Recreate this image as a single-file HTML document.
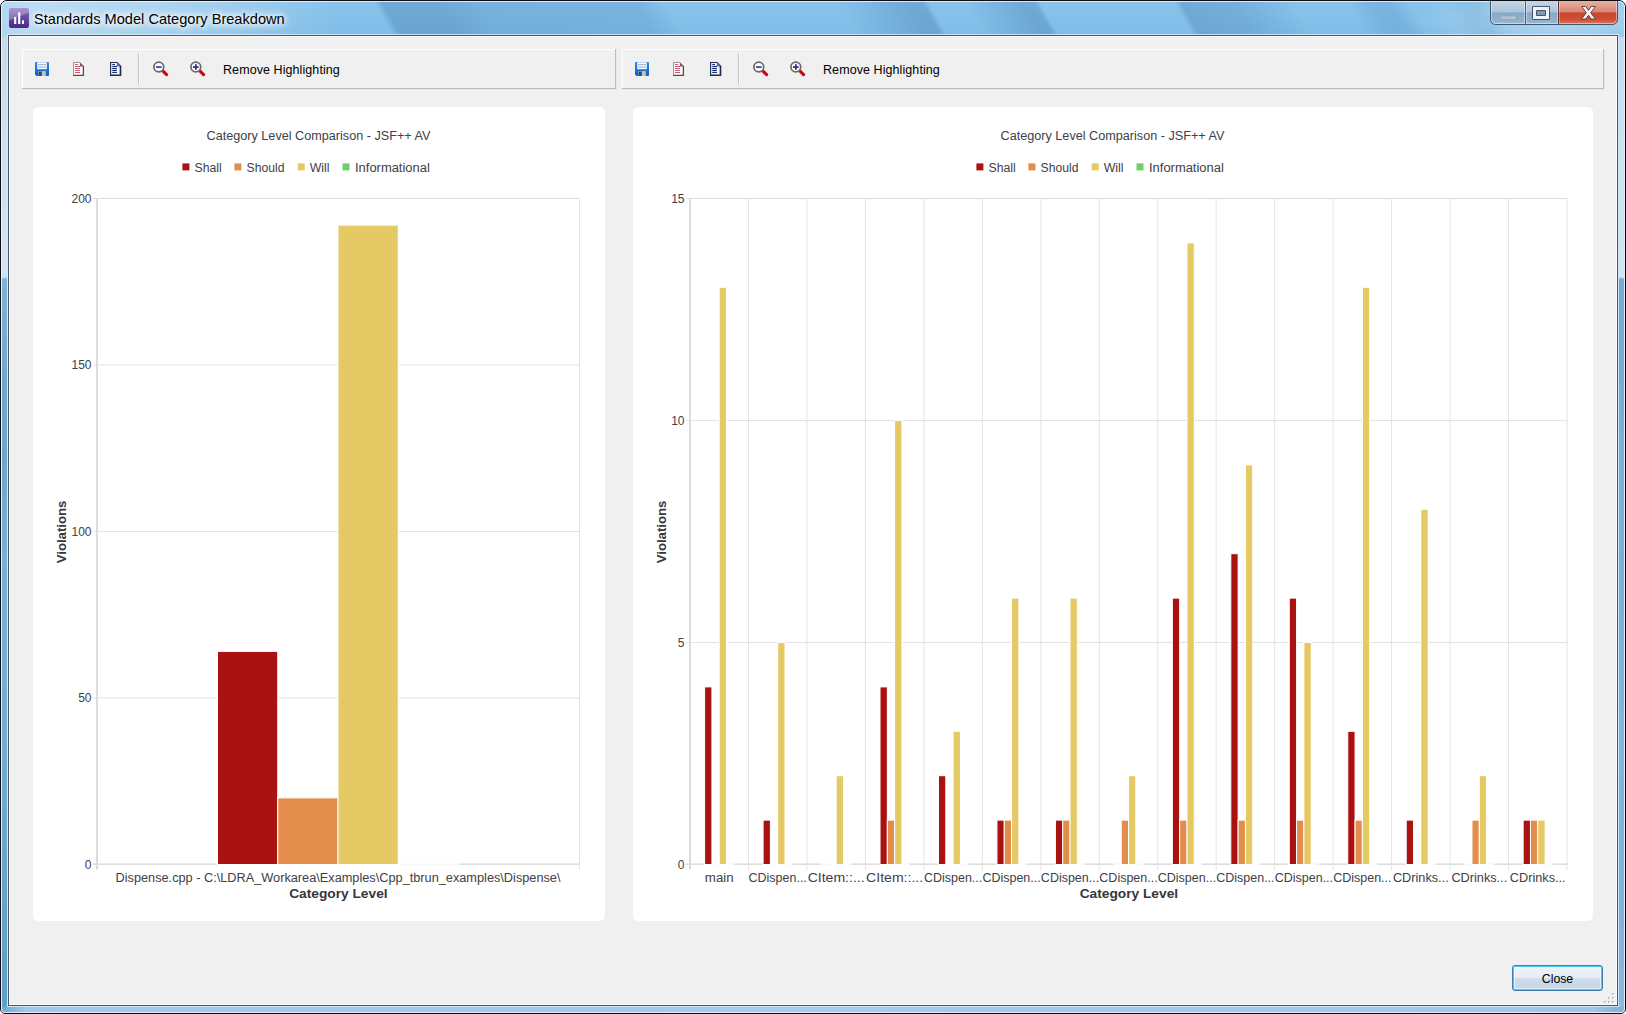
<!DOCTYPE html>
<html>
<head>
<meta charset="utf-8">
<title>Standards Model Category Breakdown</title>
<style>
html,body{margin:0;padding:0;background:#fff;}
body{width:1626px;height:1014px;position:relative;overflow:hidden;font-family:"Liberation Sans",sans-serif;}
.abs{position:absolute;}
#win{left:0;top:0;width:1624px;height:1012px;border:1px solid #0e0e10;border-radius:7px 7px 5px 5px;
 background:#7fbbe4;overflow:hidden;}
#glass{left:0;top:0;width:1624px;height:1012px;
 background:
  radial-gradient(ellipse 150px 40px at 1560px 18px, rgba(255,255,255,0.38), rgba(255,255,255,0.22) 50%, rgba(255,255,255,0) 100%),
  linear-gradient(105deg, rgba(245,250,252,0.38) 0px, rgba(255,255,255,0.44) 30px, rgba(255,255,255,0.30) 160px, rgba(255,255,255,0.05) 300px, rgba(255,255,255,0) 330px),
  linear-gradient(180deg,#88c3ec 0px,#80bde6 34px);}
#hl{left:0;top:0;width:1622px;height:1010px;border:1px solid rgba(255,255,255,0.72);border-radius:6px 6px 4px 4px;}
#sideL,#sideR{top:36px;width:5px;height:970px;
 background:linear-gradient(180deg,#c4dbec 0px,#cfe2ef 120px,#d3e4f0 236px,#c9e4f6 240px,#7eb3d6 242px,#72a9cf 330px,#6ea6cc 420px,#79b0d6 520px,#74acd2 700px,#6aa3c9 860px,#5f9fc8 969px);}
#sideL{left:1px;}
#sideR{left:1618px;background:linear-gradient(180deg,#c6dcec 0px,#cfe1ef 120px,#d3e3f0 236px,#cfe6f6 240px,#7aa9d4 242px,#79a8d2 330px,#80aed8 420px,#7eacd6 520px,#86b3dc 700px,#82afd8 860px,#90b7dc 969px);}
#bottom{left:1px;top:1006px;width:1622px;height:5px;background:linear-gradient(90deg,#6fa8d0 0px,#a3c6ea 24px,#a8caec 800px,#a3c5e8 1590px,#7fb0d8 1622px);}
#clientb{left:7px;top:34px;width:1608px;height:969px;border:1px solid #46596a;box-shadow:0 0 0 1px rgba(225,240,252,0.78);background:#f0f0f0;}
#clienti{left:0;top:0;width:1606px;height:967px;border:1px solid #fcfcfc;}
#title{left:34px;top:9px;height:20px;line-height:20px;font-size:14.6px;color:#000;white-space:nowrap;
 text-shadow:0 0 6px #fff,0 0 9px #fff,0 0 12px rgba(255,255,255,.9),0 0 4px rgba(255,255,255,.8);}
.tb{height:39px;top:49px;border-right:1px solid #bdbdbd;border-bottom:1px solid #b9b9b9;box-shadow:inset 1px 1px 0 #fff, 1px 1px 0 rgba(0,0,0,0.03);}
.tbtxt{top:63px;font-size:12.5px;letter-spacing:0.08px;line-height:14px;color:#000;white-space:nowrap;}
.panel{background:#fff;border-radius:5px;top:107px;height:814px;}
#close{left:1512px;top:965px;width:89px;height:24px;border:1px solid #3c7fb1;border-radius:3px;
 box-shadow:inset 0 0 0 1px #42cdf4, inset 0 0 0 2px rgba(255,255,255,0.55);
 background:linear-gradient(180deg,#eef3f8 0%,#e6edf4 48%,#d0dde9 52%,#c6d6e6 100%);
 font-size:12.3px;line-height:26px;text-align:center;color:#000;}
svg text{font-family:"Liberation Sans",sans-serif;}
</style>
</head>
<body>
<div id="win" class="abs">
 <div id="glass" class="abs"></div>
<svg class="abs" style="left:0;top:0" width="1624" height="34" viewBox="0 0 1624 34">
  <defs>
   <linearGradient id="s1" x1="0" y1="0" x2="1" y2="0"><stop offset="0" stop-color="#2d6494" stop-opacity="0"/><stop offset="0.03" stop-color="#2d6494" stop-opacity="0.27"/><stop offset="0.22" stop-color="#2d6494" stop-opacity="0.27"/><stop offset="0.36" stop-color="#2d6494" stop-opacity="0.17"/><stop offset="0.9" stop-color="#2d6494" stop-opacity="0.15"/><stop offset="1" stop-color="#2d6494" stop-opacity="0"/></linearGradient>
   <linearGradient id="s2" x1="0" y1="0" x2="1" y2="0"><stop offset="0" stop-color="#2d6494" stop-opacity="0"/><stop offset="0.8" stop-color="#2d6494" stop-opacity="0.27"/><stop offset="0.93" stop-color="#2d6494" stop-opacity="0.25"/><stop offset="1" stop-color="#2d6494" stop-opacity="0"/></linearGradient>
   <linearGradient id="s4" x1="0" y1="0" x2="1" y2="0"><stop offset="0" stop-color="#2d6494" stop-opacity="0"/><stop offset="0.06" stop-color="#2d6494" stop-opacity="0.25"/><stop offset="0.5" stop-color="#2d6494" stop-opacity="0.2"/><stop offset="1" stop-color="#2d6494" stop-opacity="0"/></linearGradient>
   <linearGradient id="s5" x1="0" y1="0" x2="1" y2="0"><stop offset="0" stop-color="#2d6494" stop-opacity="0"/><stop offset="0.4" stop-color="#2d6494" stop-opacity="0.14"/><stop offset="0.7" stop-color="#2d6494" stop-opacity="0.14"/><stop offset="1" stop-color="#2d6494" stop-opacity="0"/></linearGradient>
  </defs>
  <g transform="skewX(30)">
   <rect x="372" y="0" width="290" height="34" fill="url(#s1)"/>
   <rect x="835" y="0" width="92" height="34" fill="url(#s2)"/>
   <rect x="962" y="0" width="76" height="34" fill="url(#s2)"/>
   <rect x="1172" y="0" width="120" height="34" fill="url(#s4)"/>
   <rect x="1345" y="0" width="62" height="34" fill="url(#s5)"/>
   <rect x="1440" y="0" width="50" height="34" fill="url(#s5)" opacity="0.7"/>
  </g>
 </svg>
 <div id="sideL" class="abs"></div>
 <div id="sideR" class="abs"></div>
 <div id="bottom" class="abs"></div>
 <div id="hl" class="abs"></div>
 <div id="clientb" class="abs"><div id="clienti" class="abs"></div></div>
</div>

<!-- title bar -->
<svg class="abs" style="left:9px;top:8px" width="20" height="20" viewBox="0 0 20 20">
 <defs><linearGradient id="ig" x1="0" y1="0" x2="0" y2="1"><stop offset="0" stop-color="#8e70bd"/><stop offset="0.5" stop-color="#6543a6"/><stop offset="1" stop-color="#482886"/></linearGradient></defs>
 <rect x="0" y="0" width="20" height="20" rx="2.2" fill="url(#ig)"/>
 <path d="M0 2.2a2.2 2.2 0 0 1 2.2-2.2h15.6a2.2 2.2 0 0 1 2.2 2.2V4.5L0 12.5z" fill="#fff" opacity="0.26"/>
 <rect x="5.1" y="9" width="2.2" height="7" fill="#fff" opacity="0.95"/>
 <rect x="9.1" y="4.3" width="2.2" height="11.7" fill="#fff" opacity="0.97"/>
 <rect x="13" y="12.3" width="2" height="3.7" fill="#fff" opacity="0.95"/>
</svg>
<div id="title" class="abs">Standards Model Category Breakdown</div>

<!-- caption buttons -->
<svg class="abs" style="left:1486px;top:0" width="136" height="28" viewBox="1486 0 136 28">
 <defs>
  <linearGradient id="gb" x1="0" y1="0" x2="0" y2="1"><stop offset="0" stop-color="#c3d7e7"/><stop offset="0.45" stop-color="#aac5da"/><stop offset="0.5" stop-color="#86aaca"/><stop offset="0.85" stop-color="#8fb2d0"/><stop offset="1" stop-color="#a3c3dc"/></linearGradient>
  <linearGradient id="gc" x1="0" y1="0" x2="0" y2="1"><stop offset="0" stop-color="#e8b0a2"/><stop offset="0.45" stop-color="#d98672"/><stop offset="0.5" stop-color="#c8452c"/><stop offset="0.8" stop-color="#cf5238"/><stop offset="1" stop-color="#dd8a70"/></linearGradient>
  <clipPath id="cpb"><path d="M1490.5 1H1617.5V19.5a5 5 0 0 1-5 5H1495.5a5 5 0 0 1-5-5z"/></clipPath>
 </defs>
 <g clip-path="url(#cpb)">
  <rect x="1490" y="1" width="35" height="24" fill="url(#gb)"/>
  <rect x="1525" y="1" width="33" height="24" fill="url(#gb)"/>
  <rect x="1558" y="1" width="60" height="24" fill="url(#gc)"/>
 </g>
 <path d="M1490.5 1V19.5a5 5 0 0 0 5 5H1612.5a5 5 0 0 0 5-5V1" fill="none" stroke="#41556b" stroke-width="1"/>
 <path d="M1491.5 1V19.5a4 4 0 0 0 4 4H1612.5a4 4 0 0 0 4-4V1" fill="none" stroke="#fff" stroke-opacity="0.45" stroke-width="1"/>
 <line x1="1525.5" y1="1" x2="1525.5" y2="24" stroke="#4a5f78"/>
 <line x1="1558.5" y1="1" x2="1558.5" y2="24" stroke="#6a3030"/>
 <line x1="1526.5" y1="1" x2="1526.5" y2="23" stroke="#fff" stroke-opacity="0.4"/>
 <line x1="1524.5" y1="1" x2="1524.5" y2="23" stroke="#fff" stroke-opacity="0.4"/>
 <line x1="1557.5" y1="1" x2="1557.5" y2="23" stroke="#fff" stroke-opacity="0.4"/>
 <line x1="1559.5" y1="1" x2="1559.5" y2="23" stroke="#fff" stroke-opacity="0.3"/>
 <!-- minimise -->
 <rect x="1501" y="16" width="15" height="3.4" fill="#b9c6d3" stroke="#8ea0b3" stroke-width="0.6" opacity="0.95"/>
 <!-- maximise -->
 <rect x="1536.5" y="10.5" width="9" height="5" fill="#7e9ab6"/><path d="M1532.5 6.5h17v13h-17z M1536.5 10.5v5h9v-5z" fill="#f1f3f6" fill-rule="evenodd" stroke="#46566c" stroke-width="1"/>
 <!-- close X -->
 <path d="M1581.6 6.5h4.2l2.7 3.9 2.7-3.9h4.2l-4.8 6.3 4.9 6.2h-4.3l-2.7-3.8-2.7 3.8h-4.3l4.9-6.2z" fill="#f6f6f6" stroke="#5a3a3a" stroke-width="0.9" stroke-linejoin="round"/>
</svg>

<!-- toolbars -->
<div class="tb abs" style="left:22px;width:593px;"></div>
<div class="tb abs" style="left:622px;width:981px;"></div>
<div class="tbtxt abs" style="left:223px;">Remove Highlighting</div>
<div class="tbtxt abs" style="left:823px;">Remove Highlighting</div>

<svg class="abs" style="left:0;top:44px" width="1626" height="50" viewBox="0 44 1626 50">
 <defs>
  <linearGradient id="sv" x1="0" y1="0" x2="0" y2="1"><stop offset="0" stop-color="#2b8ae6"/><stop offset="1" stop-color="#0f60bc"/></linearGradient>
 </defs>
 <g>
   <!-- save -->
   <path d="M35 63a1 1 0 0 1 1-1h12a1 1 0 0 1 1 1v12a1 1 0 0 1-1 1H36.5L35 74.5z" fill="url(#sv)"/>
   <rect x="37.2" y="62.3" width="9.6" height="6.9" fill="#fdfdfd"/>
   <rect x="38" y="64.2" width="8" height="1" fill="#8fa8d6"/>
   <rect x="38" y="66.6" width="8" height="1" fill="#8fa8d6"/>
   <rect x="38.5" y="71" width="7.5" height="5" fill="#b9b3a8"/>
   <rect x="39" y="71.5" width="2.6" height="4.5" fill="#123f9a"/>
   <rect x="43" y="71.5" width="1.2" height="4.5" fill="#d8c8b0"/>
   <!-- doc 1 -->
   <path d="M73.5 62.4H80L83.6 66V75.6H73.5z" fill="#fffdfd"/>
   <path d="M73.6 75.6V62.4H80" fill="none" stroke="#a67c7c" stroke-width="0.9"/>
   <path d="M80 62.2L83.9 66.1V66.4H79.8z" fill="#8a5558"/>
   <path d="M83.4 66V75.4H73.4" fill="none" stroke="#6e3c40" stroke-width="1.3"/>
   <g stroke="#cc5570" stroke-width="1"><line x1="75" y1="64.5" x2="78" y2="64.5"/><line x1="75" y1="66.5" x2="80" y2="66.5"/><line x1="75" y1="68.5" x2="80" y2="68.5"/><line x1="75" y1="70.5" x2="80" y2="70.5"/><line x1="75" y1="72.5" x2="80" y2="72.5"/></g>
   <!-- doc 2 -->
   <path d="M110.6 62.5H117L120.6 66V75.5H110.6z" fill="#fdfeff" stroke="#22304f" stroke-width="1.2"/>
   <path d="M117 62.2L120.9 66.1V66.6H116.8z" fill="#5e6f9a"/>
   <path d="M120.4 66V75.3H110.6" fill="none" stroke="#1f2c4a" stroke-width="1.5"/>
   <g stroke="#1c3278" stroke-width="1.2"><line x1="112.2" y1="64.5" x2="115" y2="64.5"/><line x1="112.2" y1="66.5" x2="117" y2="66.5"/><line x1="112.2" y1="68.5" x2="117" y2="68.5"/><line x1="112.2" y1="70.5" x2="117" y2="70.5"/><line x1="112.2" y1="72.5" x2="117" y2="72.5"/></g>
   <!-- separator -->
   <line x1="138.5" y1="53" x2="138.5" y2="85" stroke="#c3c3c3"/>
   <line x1="139.5" y1="53" x2="139.5" y2="85" stroke="#fafafa"/>
   <!-- zoom out -->
   <line x1="163" y1="71.2" x2="166.6" y2="74.6" stroke="#c8091c" stroke-width="3.2" stroke-linecap="round"/>
   <circle cx="158.8" cy="67" r="4.9" fill="#fff" stroke="#6d675c" stroke-width="1.7"/>
   <rect x="156" y="66.2" width="5.6" height="1.7" fill="#3434b0"/>
   <!-- zoom in -->
   <line x1="200" y1="71.2" x2="203.6" y2="74.6" stroke="#c8091c" stroke-width="3.2" stroke-linecap="round"/>
   <circle cx="195.8" cy="67" r="4.9" fill="#fff" stroke="#6d675c" stroke-width="1.7"/>
   <rect x="193" y="66.2" width="5.6" height="1.7" fill="#2a2a9c"/>
   <rect x="195" y="64.2" width="1.7" height="5.6" fill="#2a2a9c"/>
 </g>
 <g transform="translate(600,0)">
   <!-- save -->
   <path d="M35 63a1 1 0 0 1 1-1h12a1 1 0 0 1 1 1v12a1 1 0 0 1-1 1H36.5L35 74.5z" fill="url(#sv)"/>
   <rect x="37.2" y="62.3" width="9.6" height="6.9" fill="#fdfdfd"/>
   <rect x="38" y="64.2" width="8" height="1" fill="#8fa8d6"/>
   <rect x="38" y="66.6" width="8" height="1" fill="#8fa8d6"/>
   <rect x="38.5" y="71" width="7.5" height="5" fill="#b9b3a8"/>
   <rect x="39" y="71.5" width="2.6" height="4.5" fill="#123f9a"/>
   <rect x="43" y="71.5" width="1.2" height="4.5" fill="#d8c8b0"/>
   <!-- doc 1 -->
   <path d="M73.5 62.4H80L83.6 66V75.6H73.5z" fill="#fffdfd"/>
   <path d="M73.6 75.6V62.4H80" fill="none" stroke="#a67c7c" stroke-width="0.9"/>
   <path d="M80 62.2L83.9 66.1V66.4H79.8z" fill="#8a5558"/>
   <path d="M83.4 66V75.4H73.4" fill="none" stroke="#6e3c40" stroke-width="1.3"/>
   <g stroke="#cc5570" stroke-width="1"><line x1="75" y1="64.5" x2="78" y2="64.5"/><line x1="75" y1="66.5" x2="80" y2="66.5"/><line x1="75" y1="68.5" x2="80" y2="68.5"/><line x1="75" y1="70.5" x2="80" y2="70.5"/><line x1="75" y1="72.5" x2="80" y2="72.5"/></g>
   <!-- doc 2 -->
   <path d="M110.6 62.5H117L120.6 66V75.5H110.6z" fill="#fdfeff" stroke="#22304f" stroke-width="1.2"/>
   <path d="M117 62.2L120.9 66.1V66.6H116.8z" fill="#5e6f9a"/>
   <path d="M120.4 66V75.3H110.6" fill="none" stroke="#1f2c4a" stroke-width="1.5"/>
   <g stroke="#1c3278" stroke-width="1.2"><line x1="112.2" y1="64.5" x2="115" y2="64.5"/><line x1="112.2" y1="66.5" x2="117" y2="66.5"/><line x1="112.2" y1="68.5" x2="117" y2="68.5"/><line x1="112.2" y1="70.5" x2="117" y2="70.5"/><line x1="112.2" y1="72.5" x2="117" y2="72.5"/></g>
   <!-- separator -->
   <line x1="138.5" y1="53" x2="138.5" y2="85" stroke="#c3c3c3"/>
   <line x1="139.5" y1="53" x2="139.5" y2="85" stroke="#fafafa"/>
   <!-- zoom out -->
   <line x1="163" y1="71.2" x2="166.6" y2="74.6" stroke="#c8091c" stroke-width="3.2" stroke-linecap="round"/>
   <circle cx="158.8" cy="67" r="4.9" fill="#fff" stroke="#6d675c" stroke-width="1.7"/>
   <rect x="156" y="66.2" width="5.6" height="1.7" fill="#3434b0"/>
   <!-- zoom in -->
   <line x1="200" y1="71.2" x2="203.6" y2="74.6" stroke="#c8091c" stroke-width="3.2" stroke-linecap="round"/>
   <circle cx="195.8" cy="67" r="4.9" fill="#fff" stroke="#6d675c" stroke-width="1.7"/>
   <rect x="193" y="66.2" width="5.6" height="1.7" fill="#2a2a9c"/>
   <rect x="195" y="64.2" width="1.7" height="5.6" fill="#2a2a9c"/>
 </g>
</svg>

<!-- chart panels -->
<div class="panel abs" style="left:33px;width:572px;"></div>
<div class="panel abs" style="left:633px;width:960px;"></div>

<svg class="abs" style="left:0;top:100px" width="1626" height="830" viewBox="0 100 1626 830" shape-rendering="auto">
<g id="leftchart">
<line x1="93" y1="698" x2="579" y2="698" stroke="#e2e2e2" stroke-width="1"/>
<line x1="93" y1="531.5" x2="579" y2="531.5" stroke="#e2e2e2" stroke-width="1"/>
<line x1="93" y1="365" x2="579" y2="365" stroke="#e2e2e2" stroke-width="1"/>
<line x1="93" y1="198.5" x2="579" y2="198.5" stroke="#dcdcdc" stroke-width="1"/>
<line x1="579.5" y1="198.5" x2="579.5" y2="870" stroke="#e4e4e4" stroke-width="1"/>
<rect x="96" y="198" width="2" height="671.5" fill="#dcdcdc"/>
<rect x="93" y="863.4" width="486.5" height="1.6" fill="#dedede"/>
<rect x="217" y="862.8" width="242" height="3" fill="#fff" opacity="0.8"/>
<rect x="217.5" y="651.38" width="60.25" height="213.12" fill="#AA1111" stroke="#fff" stroke-width="1"/>
<rect x="277.75" y="797.9" width="60.25" height="66.6" fill="#E28D4B" stroke="#fff" stroke-width="1"/>
<rect x="338" y="225.14" width="60.25" height="639.36" fill="#E5C965" stroke="#fff" stroke-width="1"/>
<text x="91.5" y="868.9" font-size="12" text-anchor="end" font-weight="normal" fill="#404046">0</text>
<text x="91.5" y="702.4" font-size="12" text-anchor="end" font-weight="normal" fill="#404046">50</text>
<text x="91.5" y="535.9" font-size="12" text-anchor="end" font-weight="normal" fill="#404046">100</text>
<text x="91.5" y="369.4" font-size="12" text-anchor="end" font-weight="normal" fill="#404046">150</text>
<text x="91.5" y="202.9" font-size="12" text-anchor="end" font-weight="normal" fill="#404046">200</text>
<text x="338" y="882" font-size="12" text-anchor="middle" font-weight="normal" fill="#404046" textLength="445" lengthAdjust="spacingAndGlyphs">Dispense.cpp - C:\LDRA_Workarea\Examples\Cpp_tbrun_examples\Dispense\</text>
<text x="338.4" y="897.5" font-size="12" text-anchor="middle" font-weight="bold" fill="#36363c" textLength="98.4" lengthAdjust="spacingAndGlyphs">Category Level</text>
<text transform="translate(66.4,532) rotate(-90)" font-size="12" font-weight="bold" text-anchor="middle" fill="#36363c" textLength="62.6" lengthAdjust="spacingAndGlyphs">Violations</text>
<text x="318.5" y="139.9" font-size="12" text-anchor="middle" font-weight="normal" fill="#404046" textLength="224" lengthAdjust="spacingAndGlyphs">Category Level Comparison - JSF++ AV</text>
<rect x="182.4" y="163.4" width="7" height="7" fill="#AA1111"/>
<text x="194.5" y="171.8" font-size="12" text-anchor="start" font-weight="normal" fill="#404046" textLength="27.2" lengthAdjust="spacingAndGlyphs">Shall</text>
<rect x="234.4" y="163.4" width="7" height="7" fill="#E28D4B"/>
<text x="246.6" y="171.8" font-size="12" text-anchor="start" font-weight="normal" fill="#404046" textLength="37.8" lengthAdjust="spacingAndGlyphs">Should</text>
<rect x="297.7" y="163.4" width="7" height="7" fill="#E5C965"/>
<text x="309.7" y="171.8" font-size="12" text-anchor="start" font-weight="normal" fill="#404046" textLength="19.9" lengthAdjust="spacingAndGlyphs">Will</text>
<rect x="342.5" y="163.4" width="7" height="7" fill="#6FD066"/>
<text x="355" y="171.8" font-size="12" text-anchor="start" font-weight="normal" fill="#404046" textLength="74.8" lengthAdjust="spacingAndGlyphs">Informational</text>
</g>
<g id="rightchart">
<line x1="686" y1="642.5" x2="1567" y2="642.5" stroke="#e2e2e2" stroke-width="1"/>
<line x1="686" y1="420.5" x2="1567" y2="420.5" stroke="#e2e2e2" stroke-width="1"/>
<line x1="686" y1="198.5" x2="1567" y2="198.5" stroke="#dcdcdc" stroke-width="1"/>
<line x1="748.47" y1="198.5" x2="748.47" y2="870" stroke="#e4e4e4" stroke-width="1"/>
<line x1="806.93" y1="198.5" x2="806.93" y2="870" stroke="#e4e4e4" stroke-width="1"/>
<line x1="865.4" y1="198.5" x2="865.4" y2="870" stroke="#e4e4e4" stroke-width="1"/>
<line x1="923.87" y1="198.5" x2="923.87" y2="870" stroke="#e4e4e4" stroke-width="1"/>
<line x1="982.33" y1="198.5" x2="982.33" y2="870" stroke="#e4e4e4" stroke-width="1"/>
<line x1="1040.8" y1="198.5" x2="1040.8" y2="870" stroke="#e4e4e4" stroke-width="1"/>
<line x1="1099.27" y1="198.5" x2="1099.27" y2="870" stroke="#e4e4e4" stroke-width="1"/>
<line x1="1157.73" y1="198.5" x2="1157.73" y2="870" stroke="#e4e4e4" stroke-width="1"/>
<line x1="1216.2" y1="198.5" x2="1216.2" y2="870" stroke="#e4e4e4" stroke-width="1"/>
<line x1="1274.67" y1="198.5" x2="1274.67" y2="870" stroke="#e4e4e4" stroke-width="1"/>
<line x1="1333.13" y1="198.5" x2="1333.13" y2="870" stroke="#e4e4e4" stroke-width="1"/>
<line x1="1391.6" y1="198.5" x2="1391.6" y2="870" stroke="#e4e4e4" stroke-width="1"/>
<line x1="1450.07" y1="198.5" x2="1450.07" y2="870" stroke="#e4e4e4" stroke-width="1"/>
<line x1="1508.53" y1="198.5" x2="1508.53" y2="870" stroke="#e4e4e4" stroke-width="1"/>
<line x1="1567" y1="198.5" x2="1567" y2="870" stroke="#e4e4e4" stroke-width="1"/>
<rect x="689" y="198" width="2" height="671.5" fill="#dcdcdc"/>
<rect x="686" y="863.4" width="881.5" height="1.6" fill="#dedede"/>
<rect x="704.12" y="862.8" width="30.23" height="3" fill="#fff" opacity="0.8"/>
<rect x="704.62" y="686.9" width="7.31" height="177.6" fill="#AA1111" stroke="#fff" stroke-width="1"/>
<rect x="719.23" y="287.3" width="7.31" height="577.2" fill="#E5C965" stroke="#fff" stroke-width="1"/>
<rect x="762.58" y="862.8" width="30.23" height="3" fill="#fff" opacity="0.8"/>
<rect x="763.08" y="820.1" width="7.31" height="44.4" fill="#AA1111" stroke="#fff" stroke-width="1"/>
<rect x="777.7" y="642.5" width="7.31" height="222" fill="#E5C965" stroke="#fff" stroke-width="1"/>
<rect x="821.05" y="862.8" width="30.23" height="3" fill="#fff" opacity="0.8"/>
<rect x="836.17" y="775.7" width="7.31" height="88.8" fill="#E5C965" stroke="#fff" stroke-width="1"/>
<rect x="879.52" y="862.8" width="30.23" height="3" fill="#fff" opacity="0.8"/>
<rect x="880.02" y="686.9" width="7.31" height="177.6" fill="#AA1111" stroke="#fff" stroke-width="1"/>
<rect x="887.32" y="820.1" width="7.31" height="44.4" fill="#E28D4B" stroke="#fff" stroke-width="1"/>
<rect x="894.63" y="420.5" width="7.31" height="444" fill="#E5C965" stroke="#fff" stroke-width="1"/>
<rect x="937.98" y="862.8" width="30.23" height="3" fill="#fff" opacity="0.8"/>
<rect x="938.48" y="775.7" width="7.31" height="88.8" fill="#AA1111" stroke="#fff" stroke-width="1"/>
<rect x="953.1" y="731.3" width="7.31" height="133.2" fill="#E5C965" stroke="#fff" stroke-width="1"/>
<rect x="996.45" y="862.8" width="30.23" height="3" fill="#fff" opacity="0.8"/>
<rect x="996.95" y="820.1" width="7.31" height="44.4" fill="#AA1111" stroke="#fff" stroke-width="1"/>
<rect x="1004.26" y="820.1" width="7.31" height="44.4" fill="#E28D4B" stroke="#fff" stroke-width="1"/>
<rect x="1011.57" y="598.1" width="7.31" height="266.4" fill="#E5C965" stroke="#fff" stroke-width="1"/>
<rect x="1054.92" y="862.8" width="30.23" height="3" fill="#fff" opacity="0.8"/>
<rect x="1055.42" y="820.1" width="7.31" height="44.4" fill="#AA1111" stroke="#fff" stroke-width="1"/>
<rect x="1062.72" y="820.1" width="7.31" height="44.4" fill="#E28D4B" stroke="#fff" stroke-width="1"/>
<rect x="1070.03" y="598.1" width="7.31" height="266.4" fill="#E5C965" stroke="#fff" stroke-width="1"/>
<rect x="1113.38" y="862.8" width="30.23" height="3" fill="#fff" opacity="0.8"/>
<rect x="1121.19" y="820.1" width="7.31" height="44.4" fill="#E28D4B" stroke="#fff" stroke-width="1"/>
<rect x="1128.5" y="775.7" width="7.31" height="88.8" fill="#E5C965" stroke="#fff" stroke-width="1"/>
<rect x="1171.85" y="862.8" width="30.23" height="3" fill="#fff" opacity="0.8"/>
<rect x="1172.35" y="598.1" width="7.31" height="266.4" fill="#AA1111" stroke="#fff" stroke-width="1"/>
<rect x="1179.66" y="820.1" width="7.31" height="44.4" fill="#E28D4B" stroke="#fff" stroke-width="1"/>
<rect x="1186.97" y="242.9" width="7.31" height="621.6" fill="#E5C965" stroke="#fff" stroke-width="1"/>
<rect x="1230.32" y="862.8" width="30.23" height="3" fill="#fff" opacity="0.8"/>
<rect x="1230.82" y="553.7" width="7.31" height="310.8" fill="#AA1111" stroke="#fff" stroke-width="1"/>
<rect x="1238.12" y="820.1" width="7.31" height="44.4" fill="#E28D4B" stroke="#fff" stroke-width="1"/>
<rect x="1245.43" y="464.9" width="7.31" height="399.6" fill="#E5C965" stroke="#fff" stroke-width="1"/>
<rect x="1288.78" y="862.8" width="30.23" height="3" fill="#fff" opacity="0.8"/>
<rect x="1289.28" y="598.1" width="7.31" height="266.4" fill="#AA1111" stroke="#fff" stroke-width="1"/>
<rect x="1296.59" y="820.1" width="7.31" height="44.4" fill="#E28D4B" stroke="#fff" stroke-width="1"/>
<rect x="1303.9" y="642.5" width="7.31" height="222" fill="#E5C965" stroke="#fff" stroke-width="1"/>
<rect x="1347.25" y="862.8" width="30.23" height="3" fill="#fff" opacity="0.8"/>
<rect x="1347.75" y="731.3" width="7.31" height="133.2" fill="#AA1111" stroke="#fff" stroke-width="1"/>
<rect x="1355.06" y="820.1" width="7.31" height="44.4" fill="#E28D4B" stroke="#fff" stroke-width="1"/>
<rect x="1362.37" y="287.3" width="7.31" height="577.2" fill="#E5C965" stroke="#fff" stroke-width="1"/>
<rect x="1405.72" y="862.8" width="30.23" height="3" fill="#fff" opacity="0.8"/>
<rect x="1406.22" y="820.1" width="7.31" height="44.4" fill="#AA1111" stroke="#fff" stroke-width="1"/>
<rect x="1420.83" y="509.3" width="7.31" height="355.2" fill="#E5C965" stroke="#fff" stroke-width="1"/>
<rect x="1464.18" y="862.8" width="30.23" height="3" fill="#fff" opacity="0.8"/>
<rect x="1471.99" y="820.1" width="7.31" height="44.4" fill="#E28D4B" stroke="#fff" stroke-width="1"/>
<rect x="1479.3" y="775.7" width="7.31" height="88.8" fill="#E5C965" stroke="#fff" stroke-width="1"/>
<rect x="1522.65" y="862.8" width="30.23" height="3" fill="#fff" opacity="0.8"/>
<rect x="1523.15" y="820.1" width="7.31" height="44.4" fill="#AA1111" stroke="#fff" stroke-width="1"/>
<rect x="1530.46" y="820.1" width="7.31" height="44.4" fill="#E28D4B" stroke="#fff" stroke-width="1"/>
<rect x="1537.77" y="820.1" width="7.31" height="44.4" fill="#E5C965" stroke="#fff" stroke-width="1"/>
<text x="684.5" y="868.9" font-size="12" text-anchor="end" font-weight="normal" fill="#404046">0</text>
<text x="684.5" y="646.9" font-size="12" text-anchor="end" font-weight="normal" fill="#404046">5</text>
<text x="684.5" y="424.9" font-size="12" text-anchor="end" font-weight="normal" fill="#404046">10</text>
<text x="684.5" y="202.9" font-size="12" text-anchor="end" font-weight="normal" fill="#404046">15</text>
<text x="719.23" y="882" font-size="12" text-anchor="middle" font-weight="normal" fill="#404046" textLength="28.8" lengthAdjust="spacingAndGlyphs">main</text>
<text x="777.7" y="882" font-size="12" text-anchor="middle" font-weight="normal" fill="#404046" textLength="58.3" lengthAdjust="spacingAndGlyphs">CDispen...</text>
<text x="836.17" y="882" font-size="12" text-anchor="middle" font-weight="normal" fill="#404046" textLength="57" lengthAdjust="spacingAndGlyphs">CItem::...</text>
<text x="894.63" y="882" font-size="12" text-anchor="middle" font-weight="normal" fill="#404046" textLength="57" lengthAdjust="spacingAndGlyphs">CItem::...</text>
<text x="953.1" y="882" font-size="12" text-anchor="middle" font-weight="normal" fill="#404046" textLength="58.3" lengthAdjust="spacingAndGlyphs">CDispen...</text>
<text x="1011.57" y="882" font-size="12" text-anchor="middle" font-weight="normal" fill="#404046" textLength="58.3" lengthAdjust="spacingAndGlyphs">CDispen...</text>
<text x="1070.03" y="882" font-size="12" text-anchor="middle" font-weight="normal" fill="#404046" textLength="58.3" lengthAdjust="spacingAndGlyphs">CDispen...</text>
<text x="1128.5" y="882" font-size="12" text-anchor="middle" font-weight="normal" fill="#404046" textLength="58.3" lengthAdjust="spacingAndGlyphs">CDispen...</text>
<text x="1186.97" y="882" font-size="12" text-anchor="middle" font-weight="normal" fill="#404046" textLength="58.3" lengthAdjust="spacingAndGlyphs">CDispen...</text>
<text x="1245.43" y="882" font-size="12" text-anchor="middle" font-weight="normal" fill="#404046" textLength="58.3" lengthAdjust="spacingAndGlyphs">CDispen...</text>
<text x="1303.9" y="882" font-size="12" text-anchor="middle" font-weight="normal" fill="#404046" textLength="58.3" lengthAdjust="spacingAndGlyphs">CDispen...</text>
<text x="1362.37" y="882" font-size="12" text-anchor="middle" font-weight="normal" fill="#404046" textLength="58.3" lengthAdjust="spacingAndGlyphs">CDispen...</text>
<text x="1420.83" y="882" font-size="12" text-anchor="middle" font-weight="normal" fill="#404046" textLength="55.8" lengthAdjust="spacingAndGlyphs">CDrinks...</text>
<text x="1479.3" y="882" font-size="12" text-anchor="middle" font-weight="normal" fill="#404046" textLength="55.8" lengthAdjust="spacingAndGlyphs">CDrinks...</text>
<text x="1537.77" y="882" font-size="12" text-anchor="middle" font-weight="normal" fill="#404046" textLength="55.8" lengthAdjust="spacingAndGlyphs">CDrinks...</text>
<text x="1128.9" y="897.5" font-size="12" text-anchor="middle" font-weight="bold" fill="#36363c" textLength="98.4" lengthAdjust="spacingAndGlyphs">Category Level</text>
<text transform="translate(666.4,532) rotate(-90)" font-size="12" font-weight="bold" text-anchor="middle" fill="#36363c" textLength="62.6" lengthAdjust="spacingAndGlyphs">Violations</text>
<text x="1112.5" y="139.9" font-size="12" text-anchor="middle" font-weight="normal" fill="#404046" textLength="224" lengthAdjust="spacingAndGlyphs">Category Level Comparison - JSF++ AV</text>
<rect x="976.4" y="163.4" width="7" height="7" fill="#AA1111"/>
<text x="988.5" y="171.8" font-size="12" text-anchor="start" font-weight="normal" fill="#404046" textLength="27.2" lengthAdjust="spacingAndGlyphs">Shall</text>
<rect x="1028.4" y="163.4" width="7" height="7" fill="#E28D4B"/>
<text x="1040.6" y="171.8" font-size="12" text-anchor="start" font-weight="normal" fill="#404046" textLength="37.8" lengthAdjust="spacingAndGlyphs">Should</text>
<rect x="1091.7" y="163.4" width="7" height="7" fill="#E5C965"/>
<text x="1103.7" y="171.8" font-size="12" text-anchor="start" font-weight="normal" fill="#404046" textLength="19.9" lengthAdjust="spacingAndGlyphs">Will</text>
<rect x="1136.5" y="163.4" width="7" height="7" fill="#6FD066"/>
<text x="1149" y="171.8" font-size="12" text-anchor="start" font-weight="normal" fill="#404046" textLength="74.8" lengthAdjust="spacingAndGlyphs">Informational</text>
</g>
</svg>

<!-- close button -->
<div id="close" class="abs">Close</div>
<!-- size grip -->
<svg class="abs" style="left:1602px;top:991px" width="14" height="14" viewBox="0 0 14 14">
 <g fill="#b8b8b8">
  <rect x="10" y="2" width="2" height="2"/><rect x="6" y="6" width="2" height="2"/><rect x="10" y="6" width="2" height="2"/>
  <rect x="2" y="10" width="2" height="2"/><rect x="6" y="10" width="2" height="2"/><rect x="10" y="10" width="2" height="2"/>
 </g>
 <g fill="#fff">
  <rect x="11" y="3" width="1" height="1"/><rect x="7" y="7" width="1" height="1"/><rect x="11" y="7" width="1" height="1"/>
  <rect x="3" y="11" width="1" height="1"/><rect x="7" y="11" width="1" height="1"/><rect x="11" y="11" width="1" height="1"/>
 </g>
</svg>
</body>
</html>
